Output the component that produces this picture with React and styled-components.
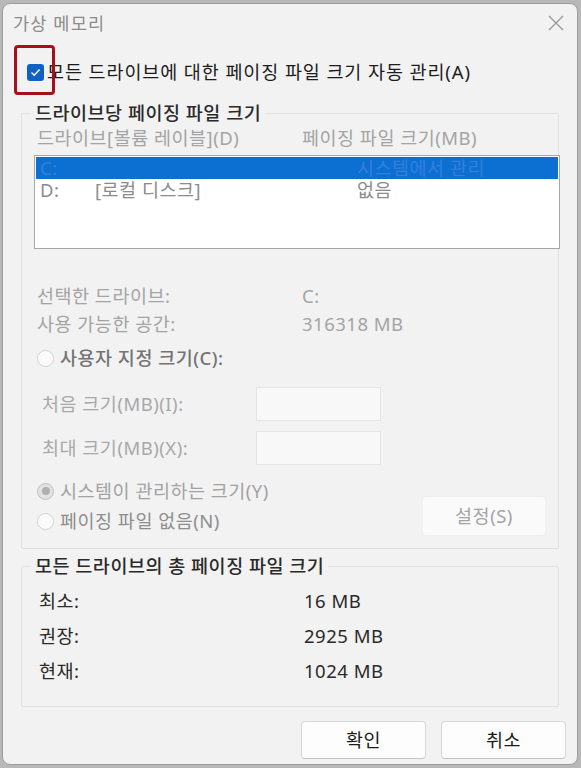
import React from 'react';
import styled, { createGlobalStyle } from 'styled-components';

const GlobalStyle = createGlobalStyle`
    html, body {
        margin: 0;
        padding: 0;
        background: #b8b8b8;
    }
    body {
        font-family: "Noto Sans", "Noto Sans CJK KR", sans-serif;
        font-size: 18.5px;
        line-height: 1.2;
        letter-spacing: 0.5px;
    }
`;

const Window = styled.div`
    width: 574px;
    height: 760px;
    margin: 3px 0 0 2px;
    background: #f2f2f2;
    border: 1px solid #9c9c9c;
    border-radius: 8px;
    display: flex;
    flex-direction: column;
    overflow: hidden;
`;

const TitleBar = styled.div`
    height: 38px;
    display: flex;
    align-items: center;
    justify-content: space-between;
    padding: 0 12px 0 10px;
`;

const Title = styled.span`
    color: #8c8c8c;
    font-size: 17.5px;
    letter-spacing: 1.2px;
`;

const AutoRow = styled.div`
    position: relative;
    height: 40px;
    margin-top: 10px;
    padding-left: 24px;
    display: flex;
    align-items: center;
    gap: 3px;
    color: #1c1c1c;
    letter-spacing: 0.9px;
`;

const Highlight = styled.div`
    position: absolute;
    left: 11px;
    top: -7px;
    width: 35px;
    height: 44px;
    border: 3px solid #a3121c;
    border-radius: 4px;
`;

const Checkbox = styled.span`
    width: 17px;
    height: 17px;
    flex: none;
    border-radius: 3px;
    background: #1160c4;
    display: flex;
    align-items: center;
    justify-content: center;
`;

const Group = styled.fieldset`
    margin: ${p => p.$top}px 18px 0 18px;
    padding: 0 12px ${p => p.$bottom}px 15px;
    border: 1px solid #e0e0e0;
    border-radius: 2px;
    min-width: 0;
`;

const Legend = styled.legend`
    padding: 0 4px;
    margin-left: -6px;
    line-height: 20px;
    color: #2a2a2a;
    font-weight: 500;
`;

const Columns = styled.div`
    display: grid;
    grid-template-columns: 265px auto;
    align-items: center;
    height: ${p => p.$h}px;
    margin-top: ${p => p.$mt || 0}px;
    padding-left: ${p => p.$pl || 0}px;
    color: ${p => p.$color || '#a4a4a4'};
`;

const ListBox = styled.div`
    margin: 6px -14px 0 -3px;
    height: 91px;
    background: #ffffff;
    border: 1px solid #a7a7a7;
    padding-top: 1px;
`;

const ListRow = styled.div`
    display: grid;
    grid-template-columns: 55px 262px auto;
    align-items: center;
    height: 22px;
    line-height: 20px;
    padding-left: 4px;
    margin: 0 1px;
    background: ${p => (p.$selected ? '#0c6fd2' : 'transparent')};
    color: ${p => (p.$selected ? '#3580da' : '#8c8c8c')};
`;

const RadioRow = styled.label`
    display: flex;
    align-items: center;
    gap: 6px;
    height: 24px;
    margin-top: ${p => p.$mt || 0}px;
    color: ${p => p.$color};
    font-weight: ${p => p.$weight || 400};
`;

const Radio = styled.span`
    width: 15px;
    height: 15px;
    flex: none;
    border-radius: 50%;
    border: 1px solid #d2d2d2;
    background: #fbfbfb;
    display: flex;
    align-items: center;
    justify-content: center;
    &::after {
        content: '';
        display: ${p => (p.$checked ? 'block' : 'none')};
        width: 8px;
        height: 8px;
        border-radius: 50%;
        background: #b0b0b0;
    }
    ${p => p.$checked && 'border-color: #c0c0c0; background: #e2e2e2;'}
`;

const SizeRow = styled.div`
    display: grid;
    grid-template-columns: 214px 125px;
    align-items: center;
    height: 34px;
    padding-left: 5px;
    margin-top: ${p => p.$mt}px;
    color: #a8a8a8;
`;

const SizeInput = styled.div`
    height: 32px;
    background: #f8f8f8;
    border: 1px solid #e4e4e4;
`;

const Bottom = styled.div`
    display: flex;
    justify-content: space-between;
    align-items: flex-end;
    margin-top: 14px;
`;

const SetButton = styled.div`
    width: 122px;
    height: 38px;
    margin-bottom: -3px;
    border-radius: 4px;
    background: #fafafa;
    border: 1px solid #f0f0f0;
    color: #a4a4a4;
    display: flex;
    align-items: center;
    justify-content: center;
`;

const Footer = styled.div`
    display: flex;
    justify-content: flex-end;
    gap: 15px;
    margin: 14px 11px 0 0;
`;

const Button = styled.div`
    width: 123px;
    height: 36px;
    background: #fdfdfd;
    border: 1px solid #d6d6d6;
    border-bottom-color: #c4c4c4;
    border-radius: 4px;
    color: #1c1c1c;
    display: flex;
    align-items: center;
    justify-content: center;
`;

const CloseIcon = () => (
    <svg width="18" height="18" viewBox="0 0 18 18">
        <path d="M2 2 L16 16 M16 2 L2 16" stroke="#9a9a9a" strokeWidth="1.4" fill="none" />
    </svg>
);

const CheckIcon = () => (
    <svg width="11" height="9" viewBox="0 0 11 9">
        <path d="M1.5 4.6 L4.2 7.2 L9.6 1.6" stroke="#ffffff" strokeWidth="1.4" fill="none" />
    </svg>
);

const totals = [
    ['최소:', '16 MB'],
    ['권장:', '2925 MB'],
    ['현재:', '1024 MB'],
];

const App = () => (
    <>
        <GlobalStyle />
        <Window>
            <TitleBar>
                <Title>가상 메모리</Title>
                <CloseIcon />
            </TitleBar>

            <AutoRow>
                <Highlight />
                <Checkbox><CheckIcon /></Checkbox>
                <span>모든 드라이브에 대한 페이징 파일 크기 자동 관리(A)</span>
            </AutoRow>

            <Group $top={11} $bottom={15}>
                <Legend>드라이브당 페이징 파일 크기</Legend>
                <Columns $h={22} $mt={4}>
                    <span>드라이브[볼륨 레이블](D)</span>
                    <span>페이징 파일 크기(MB)</span>
                </Columns>
                <ListBox>
                    <ListRow $selected>
                        <span>C:</span>
                        <span />
                        <span>시스템에서 관리</span>
                    </ListRow>
                    <ListRow>
                        <span>D:</span>
                        <span>[로컬 디스크]</span>
                        <span>없음</span>
                    </ListRow>
                </ListBox>
                <Columns $h={28} $mt={33}>
                    <span>선택한 드라이브:</span>
                    <span>C:</span>
                </Columns>
                <Columns $h={28}>
                    <span>사용 가능한 공간:</span>
                    <span>316318 MB</span>
                </Columns>
                <RadioRow $mt={8} $color="#747474" $weight={500}>
                    <Radio />
                    <span>사용자 지정 크기(C):</span>
                </RadioRow>
                <SizeRow $mt={17}>
                    <span>처음 크기(MB)(I):</span>
                    <SizeInput />
                </SizeRow>
                <SizeRow $mt={10}>
                    <span>최대 크기(MB)(X):</span>
                    <SizeInput />
                </SizeRow>
                <Bottom>
                    <div>
                        <RadioRow $color="#a2a2a2">
                            <Radio $checked />
                            <span>시스템이 관리하는 크기(Y)</span>
                        </RadioRow>
                        <RadioRow $mt={6} $color="#8e8e8e">
                            <Radio />
                            <span>페이징 파일 없음(N)</span>
                        </RadioRow>
                    </div>
                    <SetButton>설정(S)</SetButton>
                </Bottom>
            </Group>

            <Group $top={7} $bottom={17}>
                <Legend>모든 드라이브의 총 페이징 파일 크기</Legend>
                <div style={{ height: 8 }} />
                {totals.map(([label, value]) => (
                    <Columns key={label} $h={35} $pl={2} $color="#2a2a2a">
                        <span>{label}</span>
                        <span>{value}</span>
                    </Columns>
                ))}
            </Group>

            <Footer>
                <Button>확인</Button>
                <Button>취소</Button>
            </Footer>
        </Window>
    </>
);

export default App;
